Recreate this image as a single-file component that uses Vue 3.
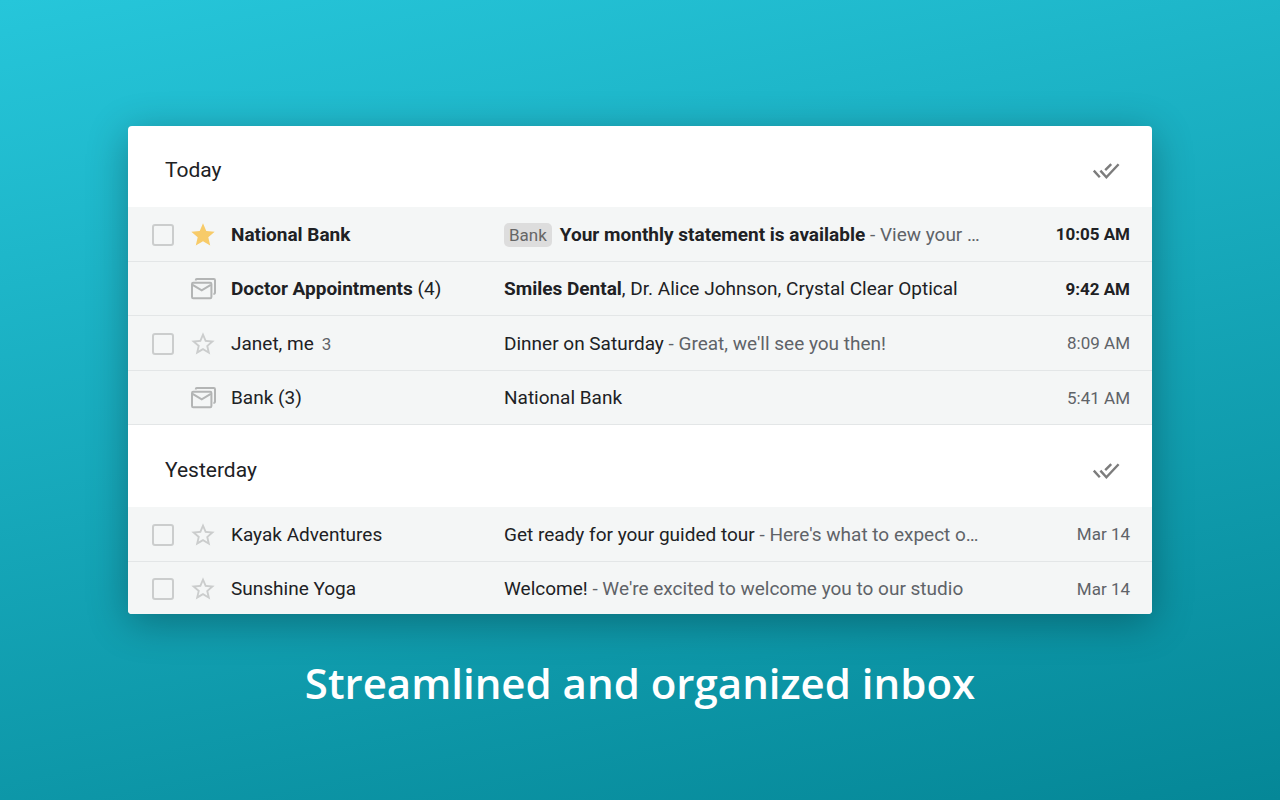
<template>
    <main class="promo">
        <div class="inbox">
            <section v-for="group in groups" :key="group.title" class="group">
                <header class="group-header">
                    <h2 class="group-title">{{ group.title }}</h2>
                    <button class="sweep-btn" type="button" :aria-label="'Mark all done: ' + group.title">
                        <svg viewBox="0 0 28 18" width="28" height="18" aria-hidden="true">
                            <path d="M1.8 9.6l6 6.6M8.4 9.6l6 6.6L26.6 3.2M13.2 9.2l6-6" />
                        </svg>
                    </button>
                </header>
                <div v-for="mail in group.mails" :key="mail.from" class="mail" :class="{ unread: mail.unread }">
                    <div class="check">
                        <input v-if="!mail.bundle" v-model="mail.checked" type="checkbox" :aria-label="'Select ' + mail.from">
                    </div>
                    <svg v-if="mail.bundle" class="bundle-icon" viewBox="0 0 26 22" width="26" height="22" aria-hidden="true">
                        <path d="M4.8 2.4V1.9Q4.8 1 5.8 1H22.8Q24 1 24 2.2V14.6Q24 16 22.4 16" />
                        <rect x="1" y="4.8" width="19.4" height="15.4" rx="1.2" />
                        <path d="M1.6 6.8l9.1 5.6 9.1-5.6" />
                    </svg>
                    <button v-else class="star-btn" type="button" :class="{ starred: mail.starred }" :aria-label="'Star ' + mail.from" @click="toggleStar(mail)">
                        <svg viewBox="0 0 24 24" width="28" height="28" aria-hidden="true">
                            <path v-if="mail.starred" d="M12 17.27L18.18 21l-1.64-7.03L22 9.24l-7.19-.61L12 2 9.19 8.63 2 9.24l5.46 4.73L5.82 21z" />
                            <path v-else d="M22 9.24l-7.19-.62L12 2 9.19 8.63 2 9.24l5.46 4.73L5.82 21 12 17.27 18.18 21l-1.63-7.03L22 9.24zM12 15.4l-3.76 2.27 1-4.28-3.32-2.88 4.38-.38L12 6.1l1.71 4.04 4.38.38-3.32 2.88 1 4.28L12 15.4z" />
                        </svg>
                    </button>
                    <div class="sender">
                        <span class="name">{{ mail.from }}</span>
                        <span v-if="mail.bundle">&nbsp;({{ mail.count }})</span>
                        <span v-else-if="mail.count" class="count">{{ mail.count }}</span>
                    </div>
                    <div class="content">
                        <span v-if="mail.label" class="label">{{ mail.label }}</span>
                        <span class="subject">{{ mail.subject }}</span>
                        <span v-if="mail.others">{{ mail.others }}</span>
                        <span v-if="mail.snippet" class="snippet"> - {{ mail.snippet }}</span>
                    </div>
                    <time class="date">{{ mail.date }}</time>
                </div>
            </section>
        </div>
        <h1 class="caption">Streamlined and organized inbox</h1>
    </main>
</template>

<script setup>
import { ref } from 'vue'

const groups = ref([
    {
        title: 'Today',
        mails: [
            {
                from: 'National Bank',
                label: 'Bank',
                subject: 'Your monthly statement is available',
                snippet: 'View your …',
                date: '10:05 AM',
                unread: true,
                starred: true
            },
            {
                from: 'Doctor Appointments',
                count: 4,
                bundle: true,
                subject: 'Smiles Dental',
                others: ', Dr. Alice Johnson, Crystal Clear Optical',
                date: '9:42 AM',
                unread: true
            },
            {
                from: 'Janet, me',
                count: 3,
                subject: 'Dinner on Saturday',
                snippet: "Great, we'll see you then!",
                date: '8:09 AM'
            },
            {
                from: 'Bank',
                count: 3,
                bundle: true,
                subject: 'National Bank',
                date: '5:41 AM'
            }
        ]
    },
    {
        title: 'Yesterday',
        mails: [
            {
                from: 'Kayak Adventures',
                subject: 'Get ready for your guided tour',
                snippet: "Here's what to expect o…",
                date: 'Mar 14'
            },
            {
                from: 'Sunshine Yoga',
                subject: 'Welcome!',
                snippet: "We're excited to welcome you to our studio",
                date: 'Mar 14'
            }
        ]
    }
])

function toggleStar(mail) {
    mail.starred = !mail.starred
}
</script>

<style>
body {
    margin: 0;
}
</style>

<style scoped>
.promo {
    box-sizing: border-box;
    min-height: 100vh;
    padding: 126px 10% 40px;
    background: linear-gradient(168deg, #26c6da, #058797);
    font-family: Roboto, "Liberation Sans", sans-serif;
    color: #202124;
}

.inbox {
    display: grid;
    gap: 1px;
    overflow: hidden;
    background: #fff;
    border-radius: 4px;
    box-shadow: 0 8px 40px rgba(0, 0, 0, 0.3);
}

.group {
    min-width: 0;
}

.group-header {
    display: flex;
    align-items: center;
    justify-content: space-between;
    height: 81px;
    padding: 6px 32px 0 37px;
    box-sizing: border-box;
}

.group-title {
    margin: 0;
    font-size: 21px;
    font-weight: 400;
}

.sweep-btn,
.star-btn {
    display: flex;
    padding: 0;
    border: 0;
    background: none;
    cursor: pointer;
}

.sweep-btn path {
    fill: none;
    stroke: #7c7c7c;
    stroke-width: 2.4;
}

.mail {
    display: flex;
    align-items: center;
    box-sizing: border-box;
    height: 55px;
    padding: 1px 22px 0 24px;
    background: #f4f6f6;
    border-bottom: 1px solid #e3e6e7;
    font-size: 19px;
    line-height: 26px;
    white-space: nowrap;
}

.mail:nth-child(odd) {
    height: 54px;
}

.group:last-child .mail:last-child {
    height: 52px;
    padding-top: 2px;
    border-bottom: 0;
}

.check {
    display: flex;
    width: 37px;
}

.check input {
    appearance: none;
    box-sizing: border-box;
    width: 22px;
    height: 22px;
    margin: 0;
    border: 2px solid #cbcdcd;
    border-radius: 3px;
}

.check input:checked {
    background: #757575;
}

.star-btn {
    width: 28px;
    margin-right: 14px;
}

.star-btn path {
    fill: #cbcdcd;
}

.starred path {
    fill: #f7cb69;
}

.bundle-icon {
    margin: 0 14px 0 2px;
}

.bundle-icon path,
.bundle-icon rect {
    fill: none;
    stroke: #b3b5b5;
    stroke-width: 2;
}

.sender {
    width: 273px;
    flex: none;
}

.unread .name,
.unread .subject,
.unread .date {
    font-weight: 700;
}

.count {
    margin-left: 8px;
    font-size: 17px;
    color: #5f6368;
}

.content {
    flex: 1;
    min-width: 0;
    overflow: hidden;
    text-overflow: ellipsis;
}

.label {
    display: inline-block;
    margin-right: 8px;
    padding: 0 5px;
    border-radius: 5px;
    background: #dddddd;
    color: #666;
    font-size: 17px;
    line-height: 24px;
}

.snippet {
    color: #5f6368;
}

.date {
    width: 134px;
    flex: none;
    padding-bottom: 1px;
    text-align: right;
    font-size: 17px;
    font-weight: 400;
    color: #5f6368;
}

.unread .date {
    color: #202124;
}

.caption {
    margin: 41px 0 0;
    font-family: "Open Sans", "Liberation Sans", sans-serif;
    font-size: 42px;
    font-weight: 600;
    line-height: 56px;
    text-align: center;
    color: #fff;
}
</style>
